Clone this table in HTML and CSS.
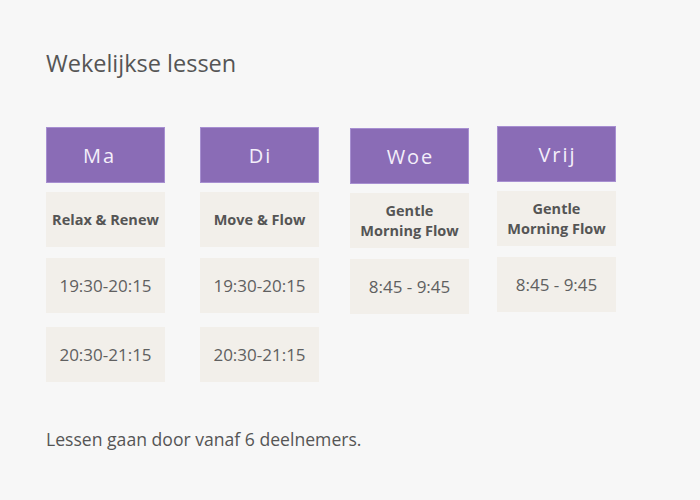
FILE: index.html
```html
<!DOCTYPE html>
<html lang="nl">
<head>
<meta charset="utf-8">
<title>Wekelijkse lessen</title>
<link rel="stylesheet" href="styles.css">
</head>
<body>
<main class="page">
  <h1 class="title">Wekelijkse lessen</h1>
  <div class="schedule">
    <div class="day">
      <div class="day-head day-head-ma">Ma</div>
      <div class="cell cell-name">Relax &amp; Renew</div>
      <div class="cell cell-time cell-first">19:30-20:15</div>
      <div class="cell cell-time cell-second">20:30-21:15</div>
    </div>
    <div class="day">
      <div class="day-head">Di</div>
      <div class="cell cell-name">Move &amp; Flow</div>
      <div class="cell cell-time cell-first">19:30-20:15</div>
      <div class="cell cell-time cell-second">20:30-21:15</div>
    </div>
    <div class="day day-woe">
      <div class="day-head">Woe</div>
      <div class="cell cell-name">Gentle<br>Morning Flow</div>
      <div class="cell cell-time cell-first">8:45 - 9:45</div>
    </div>
    <div class="day day-vrij">
      <div class="day-head">Vrij</div>
      <div class="cell cell-name">Gentle<br>Morning Flow</div>
      <div class="cell cell-time cell-first">8:45 - 9:45</div>
    </div>
  </div>
  <p class="note">Lessen gaan door vanaf 6 deelnemers.</p>
</main>
</body>
</html>
```
FILE: styles.css
```css
html, body {
  margin: 0;
  padding: 0;
  background: #f7f7f7;
}

body {
  font-family: "Open Sans", "Liberation Sans", sans-serif;
  color: #555555;
}

.page {
  padding: 47px 46px 0 46px;
}

.title {
  margin: 0;
  font-size: 23.5px;
  font-weight: 400;
  line-height: 33px;
  color: #555555;
}

.schedule {
  display: grid;
  grid-template-columns: 154px 150px 147px 119px;
  align-items: start;
  margin-top: 47px;
}

.day {
  display: flex;
  flex-direction: column;
  width: 119px;
}

.day-woe {
  margin-top: 1px;
}

.day-vrij {
  margin-top: -1px;
}

.day-head {
  box-sizing: border-box;
  height: 56px;
  display: flex;
  align-items: center;
  justify-content: center;
  padding-left: 2px;
  background: #8a6cb6;
  border: 1px solid #a78fd1;
  color: #f4effa;
  font-size: 20px;
  letter-spacing: 2px;
}

.day-head-ma {
  padding-left: 0;
  padding-right: 12px;
}

.cell {
  height: 55px;
  display: flex;
  align-items: center;
  justify-content: center;
  text-align: center;
  background: #f2efea;
}

.cell-name {
  margin-top: 9px;
  font-size: 14.5px;
  font-weight: 700;
  line-height: 20px;
  color: #555555;
}

.cell-time {
  font-size: 17px;
  color: #606060;
}

.cell-first {
  margin-top: 11px;
}

.cell-second {
  margin-top: 14px;
}

.note {
  margin: 46px 0 0 0;
  font-size: 17.6px;
  line-height: 23px;
  color: #555555;
}
```
